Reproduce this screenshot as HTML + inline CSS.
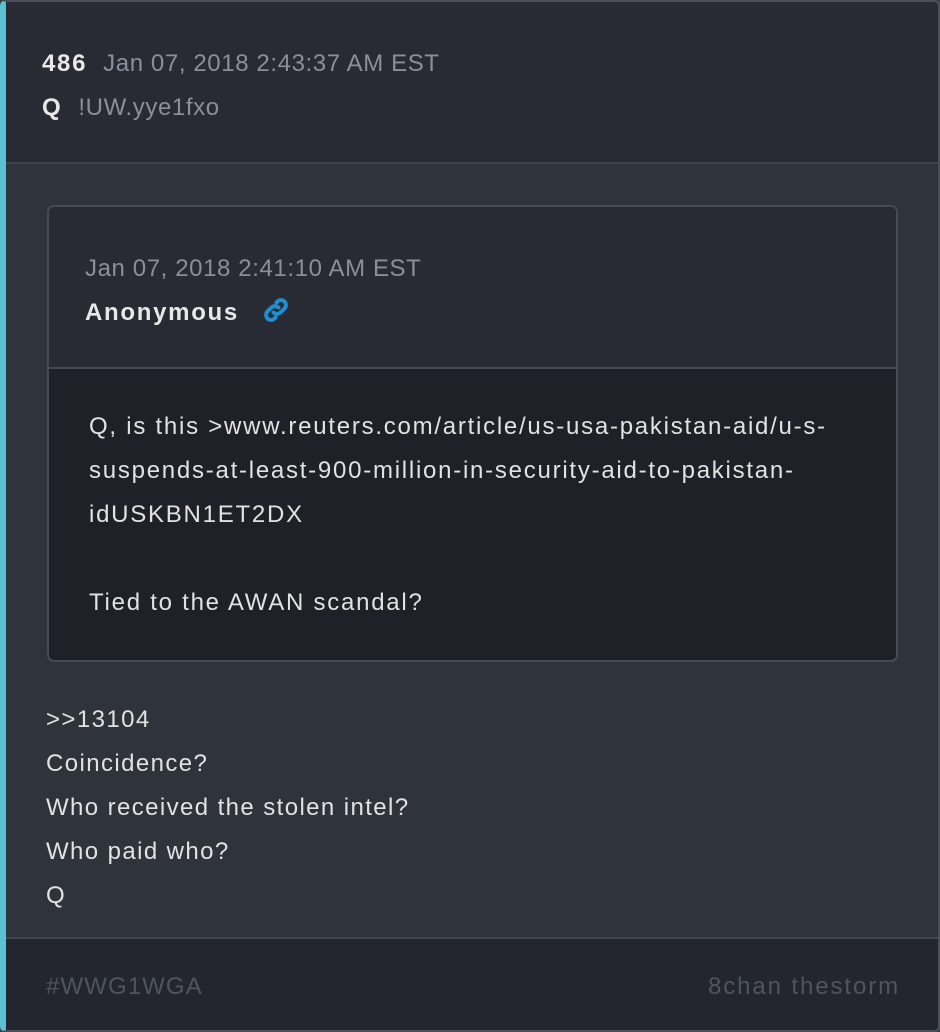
<!DOCTYPE html>
<html><head><style>
*{margin:0;padding:0;box-sizing:border-box}
body{width:940px;height:1032px;background:#3a3f47;font-family:"Liberation Sans",sans-serif;overflow:hidden}
.card{position:absolute;left:0;top:0;width:940px;height:1032px;border:2px solid #4a4f58;border-left:6px solid #5bc0d5;border-radius:6px;background:#2e333c;overflow:hidden}
.hdr{height:162px;background:#282b33;border-bottom:2px solid #3f444d;padding-top:44px;padding-left:36px}
.l1{font-size:24px;color:#8a8f9c;height:44px;line-height:36px;letter-spacing:0.6px}
.l1 b,.l2 b{color:#e8e8e8;margin-right:16px;letter-spacing:1.7px}
.l2{font-size:24px;color:#8a8f9c;line-height:36px;letter-spacing:0.6px}
.q{position:absolute;left:41px;top:203px;width:851px;height:457px;border:2px solid #454a53;border-radius:7px;overflow:hidden;background:#1f2128}
.qh{height:162px;background:#282b33;border-bottom:2px solid #454a53;padding:44px 0 0 36px}
.qb{padding:36px 0 0 40px;font-size:24px;color:#e2e2e2;line-height:44px;letter-spacing:1.75px}
.body{position:absolute;left:40px;top:696px;font-size:24px;line-height:44px;color:#e2e2e2;letter-spacing:1.4px}
.ftr{position:absolute;left:0;right:0;top:935px;bottom:0;background:#23262e;border-top:2px solid #3f444d;font-size:24px;color:#4f5560}
.ftr .a{position:absolute;left:40px;top:34px;letter-spacing:1.1px}
.ftr .b{position:absolute;right:38px;top:34px;letter-spacing:1.9px}
</style></head><body>
<div class="card">
<div class="hdr"><div class="l1"><b>486</b>Jan 07, 2018 2:43:37 AM EST</div><div class="l2"><b>Q</b>!UW.yye1fxo</div></div>
<div class="q">
<div class="qh"><div class="l1">Jan 07, 2018 2:41:10 AM EST</div><div class="l2"><b style="margin-right:22px">Anonymous</b><svg width="30" height="30" viewBox="0 0 24 24" style="vertical-align:-5px"><g fill="none" stroke="#1e8fd0" stroke-width="3.2" stroke-linecap="round"><path d="M10 14a4 4 0 0 0 5.6 0l3.5-3.5a4 4 0 0 0-5.6-5.6l-1.2 1.2"/><path d="M14 10a4 4 0 0 0-5.6 0l-3.5 3.5a4 4 0 0 0 5.6 5.6l1.2-1.2"/></g></svg></div></div>
<div class="qb">Q, is this &gt;www.reuters.com/article/us-usa-pakistan-aid/u-s-<br>suspends-at-least-900-million-in-security-aid-to-pakistan-<br>idUSKBN1ET2DX<br><br>Tied to the AWAN scandal?</div>
</div>
<div class="body">&gt;&gt;13104<br>Coincidence?<br>Who received the stolen intel?<br>Who paid who?<br>Q</div>
<div class="ftr"><span class="a">#WWG1WGA</span><span class="b">8chan thestorm</span></div>
</div>
</body></html>
